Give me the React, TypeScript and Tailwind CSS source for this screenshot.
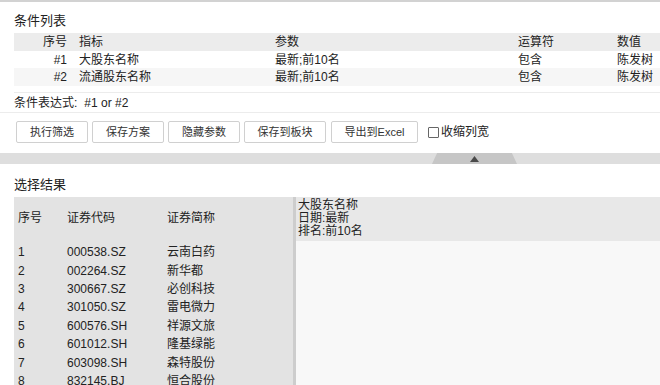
import React from "react";

const topRows = [
  { no: "#1", ind: "大股东名称", param: "最新;前10名", op: "包含", val: "陈发树", bg: "bg-white" },
  { no: "#2", ind: "流通股东名称", param: "最新;前10名", op: "包含", val: "陈发树", bg: "bg-[#f6f6f6]" },
];

const results = [
  ["1", "000538.SZ", "云南白药"],
  ["2", "002264.SZ", "新华都"],
  ["3", "300667.SZ", "必创科技"],
  ["4", "301050.SZ", "雷电微力"],
  ["5", "600576.SH", "祥源文旅"],
  ["6", "601012.SH", "隆基绿能"],
  ["7", "603098.SH", "森特股份"],
  ["8", "832145.BJ", "恒合股份"],
];

const buttons = [
  { t: "执行筛选", w: "w-[72px]" },
  { t: "保存方案", w: "w-[72px]" },
  { t: "隐藏参数", w: "w-[72px]" },
  { t: "保存到板块", w: "w-[82px]" },
  { t: "导出到Excel", w: "w-[87px]" },
];

export default function App() {
  return (
    <div className="w-[660px] h-[385px] overflow-hidden bg-white border-t-2 border-[#d2d2d2] text-[#222] font-['Liberation_Sans','Noto_Sans_CJK_SC',sans-serif] flex flex-col">
      <div className="h-[31px] pl-[14px] pt-[10px] text-[13px] leading-[18px] shrink-0">条件列表</div>

      <div className="ml-[14px] text-[12px] shrink-0">
        <div className="flex h-[18px] items-center bg-[#ececec]">
          <div className="w-[53px] text-right">序号</div>
          <div className="w-[208px] pl-[12px]">指标</div>
          <div className="w-[243px]">参数</div>
          <div className="w-[99px]">运算符</div>
          <div>数值</div>
        </div>
        {topRows.map((r, i) => (
          <div key={r.no} className={`flex items-center ${i === 0 ? "h-[17px]" : "h-[18px]"} ${r.bg}`}>
            <div className="w-[53px] text-right">{r.no}</div>
            <div className="w-[208px] pl-[12px]">{r.ind}</div>
            <div className="w-[243px]">{r.param}</div>
            <div className="w-[99px]">{r.op}</div>
            <div>{r.val}</div>
          </div>
        ))}
        <div className="h-[7px] border-b border-[#ececec]" />
      </div>

      <div className="h-[20px] pl-[14px] flex items-center text-[12px] border-b border-[#ececec] shrink-0">
        <span>条件表达式:</span>
        <span className="ml-[7px]">#1 or #2</span>
      </div>

      <div className="flex items-center pl-[16px] pt-[8px] h-[30px] gap-[4px] shrink-0">
        {buttons.map((b, i) => (
          <div
            key={b.t}
            className={`${b.w} h-[22px] flex items-center justify-center border border-[#d0d0d0] rounded-[2px] bg-white text-[11px] text-[#333] ${i === 4 ? "ml-[1px]" : ""}`}
          >
            {b.t}
          </div>
        ))}
        <div className="flex items-center ml-[6px] text-[12px]">
          <span className="w-[11px] h-[11px] border border-[#666] rounded-[1px] bg-white" />
          <span className="ml-[2px]">收缩列宽</span>
        </div>
      </div>

      <div className="h-[11px] mt-[10px] bg-[#dedede] flex justify-start shrink-0">
        <div className="ml-[432px] w-[85px] h-full bg-[#c6c6c6] [clip-path:polygon(6%_0,94%_0,100%_100%,0_100%)] flex items-center justify-center">
          <svg width="9" height="6" viewBox="0 0 9 6">
            <polygon points="4.5,0 9,6 0,6" fill="#4a4a4a" />
          </svg>
        </div>
      </div>

      <div className="h-[33px] pl-[14px] pt-[12px] text-[13px] leading-[18px] shrink-0">选择结果</div>

      <div className="flex flex-1 min-h-0 text-[12px]">
        <div className="ml-[14px] w-[282px] bg-[#e3e3e3] border-r-[3px] border-[#cdcdcd] shrink-0">
          <div className="h-[42px] flex items-center">
            <div className="w-[53px] pl-[4px]">序号</div>
            <div className="w-[100px]">证券代码</div>
            <div>证券简称</div>
          </div>
          <div className="pt-[4px]">
            {results.map((r) => (
              <div key={r[0]} className="h-[18.4px] flex items-center">
                <div className="w-[53px] pl-[4px]">{r[0]}</div>
                <div className="w-[100px]">{r[1]}</div>
                <div>{r[2]}</div>
              </div>
            ))}
          </div>
        </div>
        <div className="flex-1 flex flex-col bg-[#f8f8f8]">
          <div className="h-[44px] bg-[#e8e8e8] pl-[2px] pt-[2px] leading-[13px]">
            <div>大股东名称</div>
            <div>日期:最新</div>
            <div>排名:前10名</div>
          </div>
          <div className="flex-1" />
        </div>
      </div>
    </div>
  );
}
